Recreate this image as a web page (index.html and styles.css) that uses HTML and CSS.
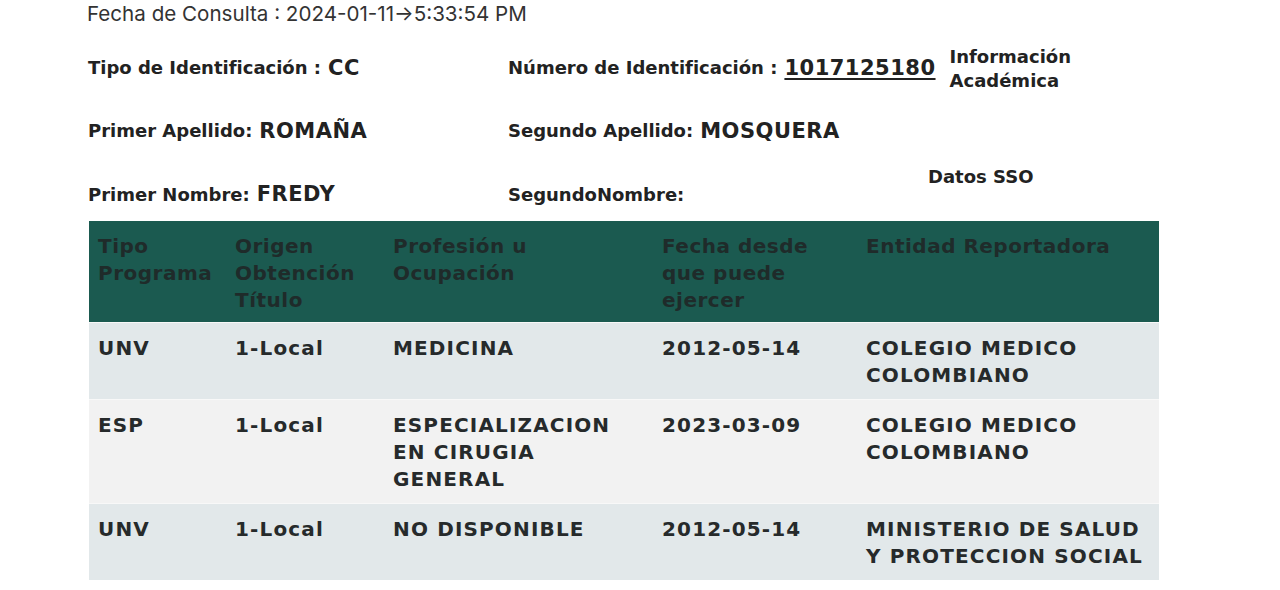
FILE: index.html
```html
<!DOCTYPE html>
<html lang="es">
<head>
<meta charset="utf-8">
<title>Consulta</title>
<link rel="stylesheet" href="styles.css">
</head>
<body>
<div class="page">
  <div class="fecha">Fecha de Consulta : 2024-01-11→5:33:54 PM</div>
  <div class="info">
    <div class="field"><span class="lbl">Tipo de Identificación :</span> <span class="val">CC</span></div>
    <div class="field wide">
      <span class="lbl">Número de Identificación :</span> <span class="val num">1017125180</span>
      <span class="link">Información<br>Académica</span>
    </div>
    <div class="field"><span class="lbl">Primer Apellido:</span> <span class="val">ROMAÑA</span></div>
    <div class="field wide"><span class="lbl">Segundo Apellido:</span> <span class="val">MOSQUERA</span></div>
    <div class="field last"><span class="lbl">Primer Nombre:</span> <span class="val">FREDY</span></div>
    <div class="field last"><span class="lbl">SegundoNombre:</span></div>
    <div class="field sso"><span class="link">Datos SSO</span></div>
  </div>
  <table class="grid">
    <thead>
      <tr>
        <th class="c1">Tipo Programa</th>
        <th class="c2">Origen Obtención Título</th>
        <th class="c3">Profesión u Ocupación</th>
        <th class="c4">Fecha desde que puede ejercer</th>
        <th class="c5">Entidad Reportadora</th>
      </tr>
    </thead>
    <tbody>
      <tr class="odd">
        <td>UNV</td><td>1-Local</td><td>MEDICINA</td><td>2012-05-14</td><td>COLEGIO MEDICO COLOMBIANO</td>
      </tr>
      <tr class="even">
        <td>ESP</td><td>1-Local</td><td>ESPECIALIZACION EN CIRUGIA GENERAL</td><td>2023-03-09</td><td>COLEGIO MEDICO COLOMBIANO</td>
      </tr>
      <tr class="odd">
        <td>UNV</td><td>1-Local</td><td>NO DISPONIBLE</td><td>2012-05-14</td><td>MINISTERIO DE SALUD Y PROTECCION SOCIAL</td>
      </tr>
    </tbody>
  </table>
</div>
</body>
</html>
```

FILE: styles.css
```css
html, body {
  margin: 0;
  padding: 0;
  background: #ffffff;
}

.page {
  padding-left: 87px;
  width: 1072px;
  color: #222222;
}

.fecha {
  font-family: Inter, "Liberation Sans", Arial, sans-serif;
  font-size: 20.6px;
  line-height: 28px;
  color: #333333;
}

.info {
  display: grid;
  grid-template-columns: 420px 420px 1fr;
  grid-template-rows: 63px 63px 59px;
  align-items: center;
  margin-top: 8px;
  padding-left: 1px;
  font-family: "DejaVu Sans", Verdana, sans-serif;
  font-weight: bold;
}

.field {
  display: flex;
  align-items: center;
  white-space: nowrap;
}

.field.wide {
  grid-column: 2 / 4;
}

.field.last {
  padding-top: 5px;
}

.lbl {
  font-size: 18px;
  color: #222222;
}

.val {
  font-size: 21px;
  letter-spacing: 0.5px;
  margin-left: 7px;
  color: #222222;
}

.num {
  text-decoration: underline;
  text-underline-offset: 3px;
  text-decoration-thickness: 2px;
}

.link {
  font-size: 18px;
  line-height: 24px;
  color: #222222;
  margin-left: 14px;
  margin-top: 2px;
}

.sso {
  align-self: start;
  margin-top: 3px;
}

.sso .link {
  margin-left: 0;
  margin-top: 0;
}

.grid {
  border-collapse: collapse;
  width: 1070px;
  margin-left: 2px;
  font-family: "DejaVu Sans", Verdana, sans-serif;
  font-weight: bold;
  font-size: 20px;
  line-height: 27px;
  color: #262a2b;
}

.grid th,
.grid td {
  text-align: left;
  vertical-align: top;
}

.grid th {
  padding: 12px 9px 8px 9px;
  color: #1f2b2a;
  font-weight: bold;
  letter-spacing: 0.5px;
}

.grid td {
  padding: 12px 9px 10px 9px;
  letter-spacing: 1.15px;
}

.grid thead tr {
  background: #1b5a50;
}

.c1 { width: 119px; }
.c2 { width: 140px; }
.c3 { width: 251px; }
.c4 { width: 186px; }

.grid tbody tr {
  border-top: 1px solid #f8f8f8;
}

.grid tr.odd {
  background: #e2e8ea;
}

.grid tr.even {
  background: #f2f2f2;
}
```
